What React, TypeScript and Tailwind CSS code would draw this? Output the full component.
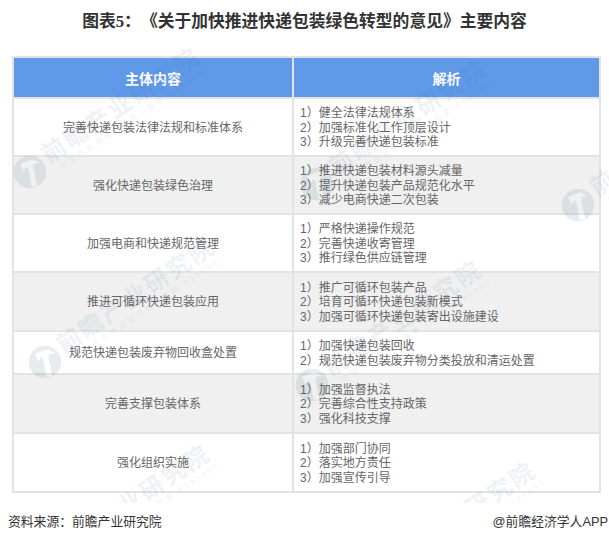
import React from 'react';

const rows = [
    { title: '完善快递包装法律法规和标准体系', items: ['健全法律法规体系', '加强标准化工作顶层设计', '升级完善快递包装标准'], h: 'h-[58px]' },
    { title: '强化快递包装绿色治理', items: ['推进快递包装材料源头减量', '提升快递包装产品规范化水平', '减少电商快递二次包装'], h: 'h-[58px]' },
    { title: '加强电商和快递规范管理', items: ['严格快递操作规范', '完善快递收寄管理', '推行绿色供应链管理'], h: 'h-[58px]' },
    { title: '推进可循环快递包装应用', items: ['推广可循环包装产品', '培育可循环快递包装新模式', '加强可循环快递包装寄出设施建设'], h: 'h-[59px]' },
    { title: '规范快递包装废弃物回收盒处置', items: ['加强快递包装回收', '规范快递包装废弃物分类投放和清运处置'], h: 'h-[43px]' },
    { title: '完善支撑包装体系', items: ['加强监督执法', '完善综合性支持政策', '强化科技支撑'], h: 'h-[59px]' },
    { title: '强化组织实施', items: ['加强部门协同', '落实地方责任', '加强宣传引导'], h: 'h-[59px]' },
];

// watermark stamp, placed so the logo centre sits at the given spot
const Watermark = ({ className }: { className: string }) => (
    <div className={`absolute w-[240px] h-[44px] flex items-center gap-[2px] origin-left -rotate-[34deg] text-[#2f5a7a] ${className}`}>
        <svg viewBox="0 0 40 40" className="w-9 h-9 shrink-0 rotate-[34deg] opacity-[0.11]">
            <path
                d="M20 2a18 18 0 1 0 0 36a18 18 0 1 0 0-36zM9 11l14-5l9 4l-7 1l-1 4l4 21l-6 1l-4-21l-3-1l-2 5z"
                fill="currentColor"
                fillRule="evenodd"
            />
        </svg>
        <div className="flex flex-col opacity-[0.07]">
            <span className="text-[24px] font-bold leading-[27px] tracking-[2.5px] whitespace-nowrap">前瞻产业研究院</span>
            <span className="pl-2 text-[8px] leading-[10px] tracking-[2.5px] whitespace-nowrap">中国产业咨询领导者（股票.839599）</span>
        </div>
    </div>
);

export default function App() {
    return (
        <div className="relative w-[609px] h-[542px] bg-white overflow-hidden font-['Liberation_Sans','Noto_Sans_CJK_SC',sans-serif]">
            <h1 className="pt-[12px] text-center text-[16.8px] leading-[20px] font-bold text-[#333] [text-spacing-trim:space-all] font-['Liberation_Serif','Noto_Sans_CJK_SC',serif]">
                图表5：《关于加快推进快递包装绿色转型的意见》主要内容
            </h1>

            <div className="ml-3 mt-[24px] w-[589px] border-2 border-[#e3e3e3] text-xs leading-[14.4px] text-[#666]">
                <div className="flex h-[39px] bg-[#5f99e8] text-white text-[14px] font-bold">
                    <div className="w-[278px] pt-[3px] flex items-center justify-center">主体内容</div>
                    <div className="w-[2px] bg-[#e3e3e3]" />
                    <div className="flex-1 pt-[3px] flex items-center justify-center">解析</div>
                </div>
                {rows.map((row, i) => (
                    <div key={row.title} className={`flex border-t-2 border-[#e3e3e3] ${row.h} ${i % 2 ? 'bg-[#f0f0f0]' : 'bg-white'}`}>
                        <div className="w-[278px] pt-[2px] flex items-center justify-center">{row.title}</div>
                        <div className="w-[2px] bg-[#e3e3e3]" />
                        <div className="flex-1 flex flex-col justify-center pt-[2px] pl-[6px]">
                            {row.items.map((item, n) => (
                                <div key={item} className="whitespace-pre">{`${n + 1}）${item}`}</div>
                            ))}
                        </div>
                    </div>
                ))}
            </div>

            <div className="absolute left-2 right-px top-[514px] flex justify-between text-[12.8px] leading-4 text-[#333]">
                <span>资料来源：前瞻产业研究院</span>
                <span>@前瞻经济学人APP</span>
            </div>

            {/* watermarks stop just above the footer */}
            <div className="absolute inset-x-0 top-0 h-[503px] overflow-hidden pointer-events-none">
                <Watermark className="left-[15px] top-[160px]" />
                <Watermark className="left-[302px] top-[172px]" />
                <Watermark className="left-[563px] top-[193px]" />
                <Watermark className="left-[30px] top-[350px]" />
                <Watermark className="left-[297px] top-[373px]" />
                <Watermark className="left-[25px] top-[557px]" />
                <Watermark className="left-[351px] top-[574px]" />
            </div>
        </div>
    );
}
